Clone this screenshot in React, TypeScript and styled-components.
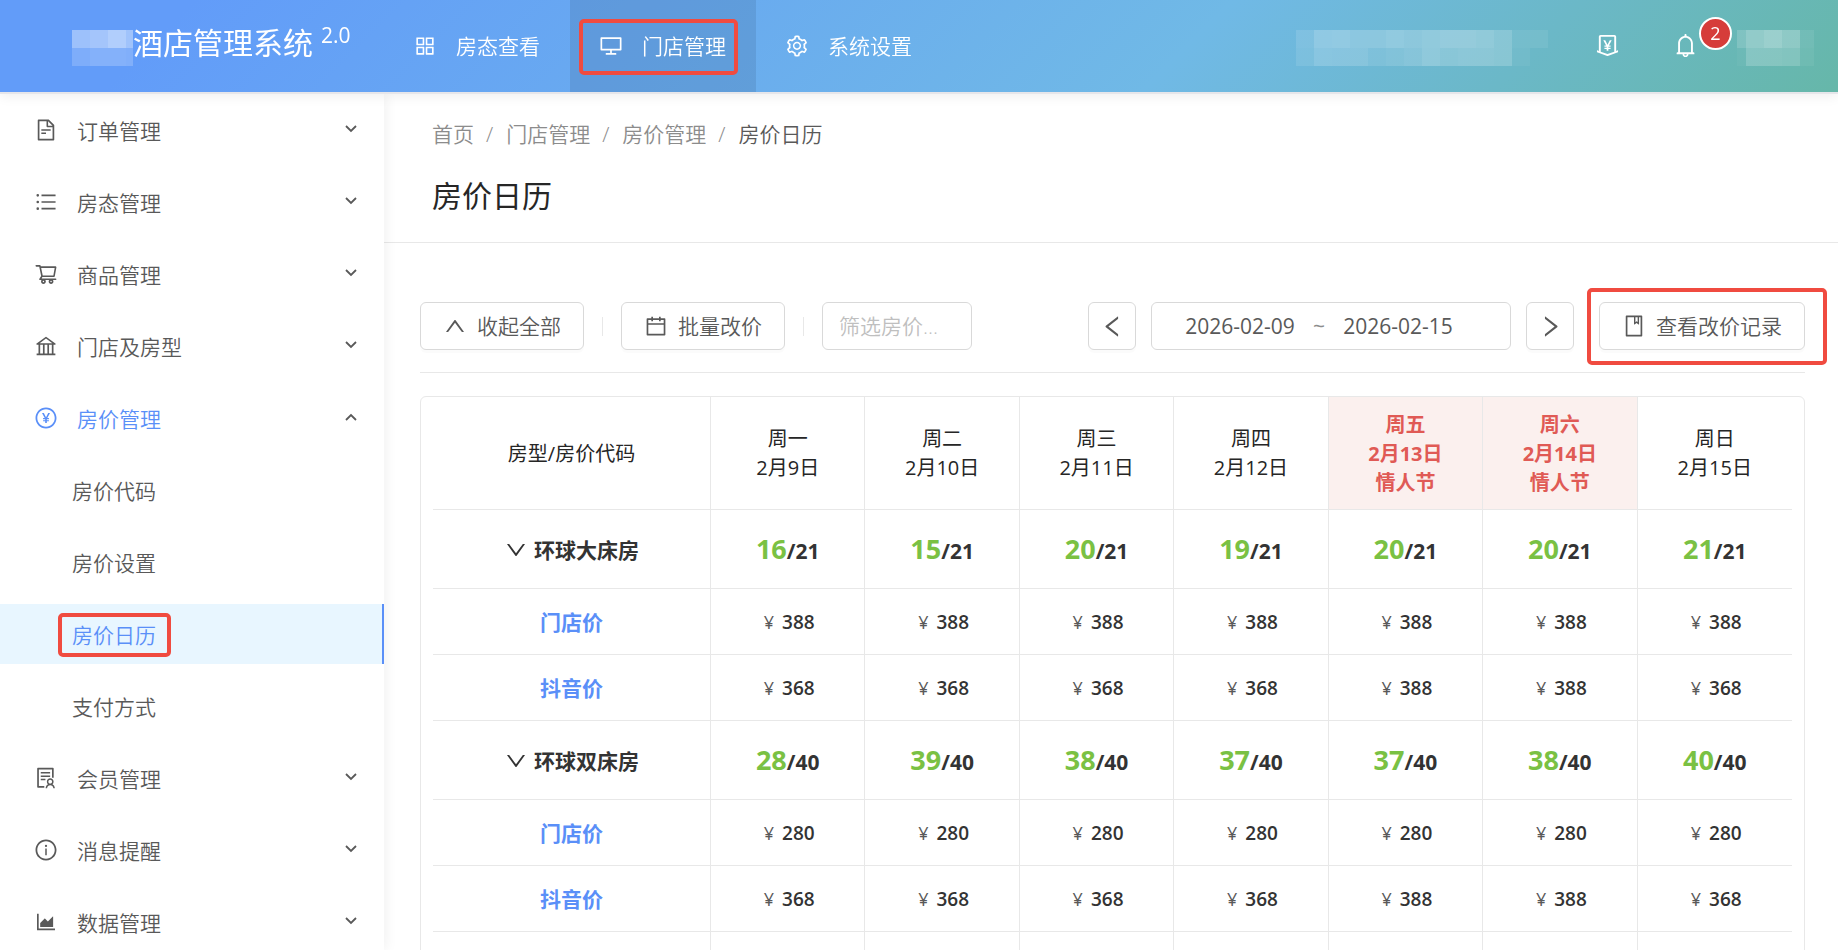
import React, { useState } from 'react';
import styled, { createGlobalStyle, css } from 'styled-components';
import {
  AiOutlineAppstore,
  AiOutlineAreaChart,
  AiOutlineBank,
  AiOutlineBell,
  AiOutlineBook,
  AiOutlineCalendar,
  AiOutlineDesktop,
  AiOutlineDown,
  AiOutlineFileText,
  AiOutlineInfoCircle,
  AiOutlineLeft,
  AiOutlineMoneyCollect,
  AiOutlinePayCircle,
  AiOutlineRight,
  AiOutlineSetting,
  AiOutlineShoppingCart,
  AiOutlineSolution,
  AiOutlineUnorderedList,
  AiOutlineUp,
} from 'react-icons/ai';

const blue = '#5a8ff8';
const line = '#e8e8e8';
const red = '#f04b40';

const GlobalStyle = createGlobalStyle`
  *, *::before, *::after { box-sizing: border-box; }
  body {
    margin: 0;
    background: #fff;
    color: #595959;
    font-family: 'Open Sans', 'Noto Sans CJK SC', sans-serif;
    font-size: 21px;
    font-weight: 350;
    line-height: 32px;
  }
  button, input { font: inherit; color: inherit; }
  a { color: inherit; text-decoration: none; }
  svg { display: block; flex: none; }
`;

const Shell = styled.div`
  display: flex;
  flex-direction: column;
  height: 100vh;
  overflow: hidden;
`;

const Header = styled.header`
  position: relative;
  z-index: 2;
  flex: none;
  display: flex;
  height: 94px;
  border-bottom: 2px solid #e6e6ea;
  background: linear-gradient(135deg, #629cf9 10%, #70b9e6 64%, #66b7a9 100%) padding-box;
  box-shadow: 0 2px 12px rgba(0, 0, 0, 0.07);
  color: #fff;
`;

const Brand = styled.div`
  flex: none;
  display: flex;
  align-items: center;
  width: 384px;
  padding: 0 0 6px 72px;
  font-size: 30px;
  font-weight: 400;
  white-space: nowrap;
`;

const Version = styled.sup`
  align-self: flex-start;
  margin: 19px 0 0 8px;
  font-size: 21px;
  line-height: 32px;
`;

const Mosaic = styled.div<{ $cols: string }>`
  flex: none;
  display: grid;
  grid-template-columns: ${(p) => p.$cols};
  grid-auto-rows: 18px;
`;

const Tile = styled.span<{ $alpha: number }>`
  background: rgba(255, 255, 255, ${(p) => p.$alpha / 100});
`;

const BrandMosaic = styled(Mosaic)`
  margin: 10px 0 0;
`;

const TopNav = styled.nav`
  display: flex;
`;

const TopLink = styled.a<{ $active?: boolean }>`
  position: relative;
  display: flex;
  align-items: center;
  gap: 19px;
  padding: 0 30px 0 29px;
  white-space: nowrap;
  background: ${(p) => (p.$active ? 'rgba(68, 112, 160, 0.25)' : 'transparent')};
  svg { font-size: 24px; }
`;

const Marker = styled.span<{ $inset: string }>`
  position: absolute;
  inset: ${(p) => p.$inset};
  border: 4px solid ${red};
  border-radius: 5px;
  pointer-events: none;
`;

const HeaderTools = styled.div`
  flex: 1;
  display: flex;
  align-items: center;
  justify-content: flex-end;
  padding: 4px 24px 0 0;
`;

const ToolButton = styled.button`
  position: relative;
  display: flex;
  padding: 0;
  border: 0;
  background: none;
  margin: 0 0 6px 46px;
  font-size: 27px;
  & + & { margin: 0 38px 6px 51px; }
`;

const Badge = styled.span`
  position: absolute;
  left: 27px;
  top: -15px;
  width: 33px;
  height: 33px;
  border: 2px solid #fff;
  border-radius: 50%;
  background: #d63c3a;
  font-size: 18px;
  font-weight: 400;
  line-height: 29px;
  text-align: center;
`;

const Body = styled.div`
  flex: 1;
  display: flex;
  min-height: 0;
`;

const Sidebar = styled.nav`
  position: relative;
  z-index: 1;
  flex: none;
  width: 384px;
  overflow-x: hidden;
  overflow-y: auto;
  scrollbar-width: none;
  box-shadow: 2px 0 12px rgba(0, 0, 0, 0.06);
  background: #fff;
`;

const MenuList = styled.ul`
  margin: 0;
  padding: 0;
  list-style: none;
`;

const menuEntry = css`
  position: relative;
  display: flex;
  align-items: center;
  width: 100%;
  height: 60px;
  margin: 6px 0 12px;
  border: 0;
  background: none;
  text-align: left;
`;

const MenuTitle = styled.button<{ $open?: boolean }>`
  ${menuEntry}
  padding: 0 27px 0 34px;
  gap: 19px;
  color: ${(p) => (p.$open ? blue : 'inherit')};
  > svg:first-child { font-size: 24px; }
`;

const MenuLabel = styled.span`
  flex: 1;
  padding-top: 2px;
`;

const Arrow = styled.svg`
  color: #595959;
  margin-bottom: 3px;
`;

const MenuLink = styled.a<{ $active?: boolean }>`
  ${menuEntry}
  padding: 2px 0 0 72px;
  ${(p) =>
    p.$active &&
    css`
      color: ${blue};
      background: #e8f6ff;
      border-right: 2px solid ${blue};
    `}
`;

const MenuRow = styled.li`
  display: flow-root;
  margin-bottom: -6px;
`;

const Main = styled.main`
  flex: 1;
  min-width: 0;
  overflow-y: auto;
  scrollbar-width: none;
`;

const PageHead = styled.div`
  padding: 24px 48px 22px;
  border-bottom: 1px solid ${line};
`;

const Crumbs = styled.ol`
  display: flex;
  margin: 0;
  padding: 0;
  list-style: none;
  color: #8c8c8c;
`;

const Crumb = styled.li`
  &:not(:last-child)::after {
    content: '/';
    margin: 0 13px 0 12px;
  }
  &:last-child { color: #595959; }
`;

const Title = styled.h1`
  margin: 22px 0 0;
  color: #262626;
  font-size: 30px;
  line-height: 48px;
  font-weight: 400;
`;

const Content = styled.section`
  padding: 59px 33px 0 36px;
`;

const Toolbar = styled.div`
  display: flex;
  align-items: center;
  padding-bottom: 22px;
  border-bottom: 1px solid ${line};
`;

const Button = styled.button`
  flex: none;
  display: flex;
  align-items: center;
  justify-content: center;
  gap: 10px;
  height: 48px;
  padding: 0 22px;
  border: 1px solid #d9d9d9;
  border-radius: 6px;
  background: #fff;
  box-shadow: 0 3px 0 rgba(0, 0, 0, 0.015);
  white-space: nowrap;
  svg { font-size: 24px; }
`;

const SquareButton = styled(Button)`
  width: 48px;
  padding: 0;
  svg { font-size: 27px; }
`;

const Divider = styled.span`
  flex: none;
  width: 1px;
  height: 19px;
  margin: 0 18px;
  background: ${line};
`;

const FilterInput = styled.input`
  width: 150px;
  height: 48px;
  padding: 0 16px;
  border: 1px solid #d9d9d9;
  border-radius: 6px;
  outline: 0;
  &::placeholder { color: #bfbfbf; }
`;

const DateControls = styled.div`
  display: flex;
  align-items: center;
  gap: 15px;
  margin-left: auto;
`;

const DateRange = styled.div`
  display: flex;
  align-items: center;
  width: 360px;
  height: 48px;
  padding-left: 18px;
  border: 1px solid #d9d9d9;
  border-radius: 6px;
  font-weight: 400;
`;

const DateInput = styled.input`
  width: 140px;
  padding: 0;
  border: 0;
  outline: 0;
  background: none;
  text-align: center;
`;

const Tilde = styled.span`
  width: 18px;
  color: #8c8c8c;
  text-align: center;
`;

const RecordWrap = styled.div`
  position: relative;
  margin-left: 25px;
`;

const TableCard = styled.div`
  margin-top: 23px;
  padding: 0 12px;
  border: 1px solid ${line};
  border-radius: 6px;
`;

const Table = styled.table`
  width: 100%;
  table-layout: fixed;
  border-collapse: separate;
  border-spacing: 0;
  font-size: 20px;
  color: #333;
`;

const cell = css`
  padding: 0;
  border-bottom: 1px solid ${line};
  text-align: center;
  &:not(:last-child) { border-right: 1px solid ${line}; }
`;

const HeadCell = styled.th<{ $holiday?: boolean }>`
  ${cell}
  height: 113px;
  color: ${(p) => (p.$holiday ? '#e05a55' : '#262626')};
  background: ${(p) => (p.$holiday ? '#fbf0ee' : 'transparent')};
  font-weight: ${(p) => (p.$holiday ? 700 : 400)};
  line-height: 29px;
  &:first-child { width: 278px; }
`;

const RowHead = styled.th<{ $tall?: boolean }>`
  ${cell}
  height: ${(p) => (p.$tall ? 79 : 66)}px;
  font-size: 21px;
`;

const Cell = styled.td`
  ${cell}
`;

const RoomToggle = styled.button`
  display: inline-flex;
  align-items: center;
  gap: 6px;
  padding: 0;
  border: 0;
  background: none;
  font-weight: 700;
  vertical-align: middle;
  svg { font-size: 24px; }
`;

const RateLink = styled.a`
  color: ${blue};
  font-weight: 700;
`;

const Stock = styled.div`
  padding-top: 2px;
  font-size: 21px;
  font-weight: 700;
`;

const Free = styled.span`
  color: #7ac143;
  font-size: 27px;
`;

const Yen = styled.span`
  margin: 0 8px 0 3px;
  color: #595959;
  font-size: 18px;
  font-weight: 400;
`;

const Price = styled.span`
  font-size: 19px;
  font-weight: 600;
`;

const brandTiles = [38, 42, 50, 40, 18, 22, 22, 20];
const hotelTiles = [
  12, 24, 25, 21, 21, 25, 22, 25, 28, 28, 25, 20, 7, 7,
  10, 19, 18, 18, 12, 15, 18, 24, 20, 22, 22, 20, 5, 0,
];
const userTiles = [16, 28, 34, 26, 8, 4, 20, 20, 18, 6];

const Tiles = ({ values }: { values: number[] }) => (
  <>
    {values.map((v, i) => (
      <Tile key={i} $alpha={v} />
    ))}
  </>
);

const subLinks = ['房价代码', '房价设置', '房价日历', '支付方式'];

const menu = [
  { label: '订单管理', Icon: AiOutlineFileText },
  { label: '房态管理', Icon: AiOutlineUnorderedList },
  { label: '商品管理', Icon: AiOutlineShoppingCart },
  { label: '门店及房型', Icon: AiOutlineBank },
  { label: '房价管理', Icon: AiOutlinePayCircle, links: subLinks },
  { label: '会员管理', Icon: AiOutlineSolution },
  { label: '消息提醒', Icon: AiOutlineInfoCircle },
  { label: '数据管理', Icon: AiOutlineAreaChart },
];

const days = [
  { week: '周一', date: '2月9日' },
  { week: '周二', date: '2月10日' },
  { week: '周三', date: '2月11日' },
  { week: '周四', date: '2月12日' },
  { week: '周五', date: '2月13日', holiday: '情人节' },
  { week: '周六', date: '2月14日', holiday: '情人节' },
  { week: '周日', date: '2月15日' },
];

const rooms = [
  {
    name: '环球大床房',
    total: 21,
    free: [16, 15, 20, 19, 20, 20, 21],
    rates: [
      { name: '门店价', prices: [388, 388, 388, 388, 388, 388, 388] },
      { name: '抖音价', prices: [368, 368, 368, 368, 388, 388, 368] },
    ],
  },
  {
    name: '环球双床房',
    total: 40,
    free: [28, 39, 38, 37, 37, 38, 40],
    rates: [
      { name: '门店价', prices: [280, 280, 280, 280, 280, 280, 280] },
      { name: '抖音价', prices: [368, 368, 368, 368, 388, 388, 368] },
    ],
  },
];

const MenuArrow = ({ up }: { up: boolean }) => (
  <Arrow width="12" height="8" viewBox="0 0 12 8" fill="none" stroke="currentColor" strokeWidth="1.8">
    <path d={up ? 'M1 7 6 2l5 5' : 'M1 1l5 5 5-5'} />
  </Arrow>
);

export default function App() {
  const [open, setOpen] = useState('房价管理');
  const [folded, setFolded] = useState<string[]>([]);
  const [from, setFrom] = useState('2026-02-09');
  const [to, setTo] = useState('2026-02-15');

  const toggleRoom = (name: string) =>
    setFolded((f) => (f.includes(name) ? f.filter((n) => n !== name) : [...f, name]));

  return (
    <>
      <GlobalStyle />
      <Shell>
        <Header>
          <Brand>
            <BrandMosaic $cols="18px 18px 18px 7px">
              <Tiles values={brandTiles} />
            </BrandMosaic>
            酒店管理系统
            <Version>2.0</Version>
          </Brand>
          <TopNav>
            <TopLink href="#rooms">
              <AiOutlineAppstore />
              房态查看
            </TopLink>
            <TopLink href="#store" $active>
              <AiOutlineDesktop />
              门店管理
              <Marker $inset="19px 18px 17px 9px" />
            </TopLink>
            <TopLink href="#settings">
              <AiOutlineSetting />
              系统设置
            </TopLink>
          </TopNav>
          <HeaderTools>
            <Mosaic $cols="repeat(14, 18px)">
              <Tiles values={hotelTiles} />
            </Mosaic>
            <ToolButton aria-label="账单">
              <AiOutlineMoneyCollect />
            </ToolButton>
            <ToolButton aria-label="消息">
              <AiOutlineBell />
              <Badge>2</Badge>
            </ToolButton>
            <Mosaic $cols="9px 18px 18px 18px 14px">
              <Tiles values={userTiles} />
            </Mosaic>
          </HeaderTools>
        </Header>
        <Body>
          <Sidebar>
            <MenuList>
              {menu.map(({ label, Icon, links }) => (
                <React.Fragment key={label}>
                  <MenuRow>
                    <MenuTitle
                      $open={!!links}
                      aria-expanded={open === label}
                      onClick={() => setOpen(open === label ? '' : label)}
                    >
                      <Icon />
                      <MenuLabel>{label}</MenuLabel>
                      <MenuArrow up={open === label} />
                    </MenuTitle>
                  </MenuRow>
                  {open === label &&
                    links?.map((link) => (
                      <MenuRow key={link}>
                        <MenuLink href={`#${link}`} $active={link === '房价日历'}>
                          {link}
                          {link === '房价日历' && <Marker $inset="9px 211px 7px 58px" />}
                        </MenuLink>
                      </MenuRow>
                    ))}
                </React.Fragment>
              ))}
            </MenuList>
          </Sidebar>
          <Main>
            <PageHead>
              <Crumbs>
                <Crumb><a href="#home">首页</a></Crumb>
                <Crumb><a href="#store">门店管理</a></Crumb>
                <Crumb><a href="#price">房价管理</a></Crumb>
                <Crumb>房价日历</Crumb>
              </Crumbs>
              <Title>房价日历</Title>
            </PageHead>
            <Content>
              <Toolbar>
                <Button onClick={() => setFolded(rooms.map((r) => r.name))}>
                  <AiOutlineUp />
                  收起全部
                </Button>
                <Divider />
                <Button>
                  <AiOutlineCalendar />
                  批量改价
                </Button>
                <Divider />
                <FilterInput aria-label="筛选房价" placeholder="筛选房价..." />
                <DateControls>
                  <SquareButton aria-label="上一周">
                    <AiOutlineLeft />
                  </SquareButton>
                  <DateRange>
                    <DateInput aria-label="开始日期" value={from} onChange={(e) => setFrom(e.target.value)} />
                    <Tilde>~</Tilde>
                    <DateInput aria-label="结束日期" value={to} onChange={(e) => setTo(e.target.value)} />
                  </DateRange>
                  <SquareButton aria-label="下一周">
                    <AiOutlineRight />
                  </SquareButton>
                </DateControls>
                <RecordWrap>
                  <Button>
                    <AiOutlineBook />
                    查看改价记录
                  </Button>
                  <Marker $inset="-14px -22px -15px -12px" />
                </RecordWrap>
              </Toolbar>
              <TableCard>
                <Table>
                  <thead>
                    <tr>
                      <HeadCell scope="col">房型/房价代码</HeadCell>
                      {days.map((d) => (
                        <HeadCell key={d.date} scope="col" $holiday={!!d.holiday}>
                          {d.week}
                          <br />
                          {d.date}
                          {d.holiday && (
                            <>
                              <br />
                              {d.holiday}
                            </>
                          )}
                        </HeadCell>
                      ))}
                    </tr>
                  </thead>
                  <tbody>
                    {rooms.map((room) => (
                      <React.Fragment key={room.name}>
                        <tr>
                          <RowHead scope="row" $tall>
                            <RoomToggle onClick={() => toggleRoom(room.name)}>
                              {folded.includes(room.name) ? <AiOutlineRight /> : <AiOutlineDown />}
                              {room.name}
                            </RoomToggle>
                          </RowHead>
                          {room.free.map((n, i) => (
                            <Cell key={i}>
                              <Stock>
                                <Free>{n}</Free>/{room.total}
                              </Stock>
                            </Cell>
                          ))}
                        </tr>
                        {!folded.includes(room.name) &&
                          room.rates.map((rate) => (
                            <tr key={rate.name}>
                              <RowHead scope="row">
                                <RateLink href="#rate">{rate.name}</RateLink>
                              </RowHead>
                              {rate.prices.map((p, i) => (
                                <Cell key={i}>
                                  <Yen>¥</Yen>
                                  <Price>{p}</Price>
                                </Cell>
                              ))}
                            </tr>
                          ))}
                      </React.Fragment>
                    ))}
                    <tr>
                      <RowHead scope="row" $tall />
                      {days.map((d) => (
                        <Cell key={d.date} />
                      ))}
                    </tr>
                  </tbody>
                </Table>
              </TableCard>
            </Content>
          </Main>
        </Body>
      </Shell>
    </>
  );
}
